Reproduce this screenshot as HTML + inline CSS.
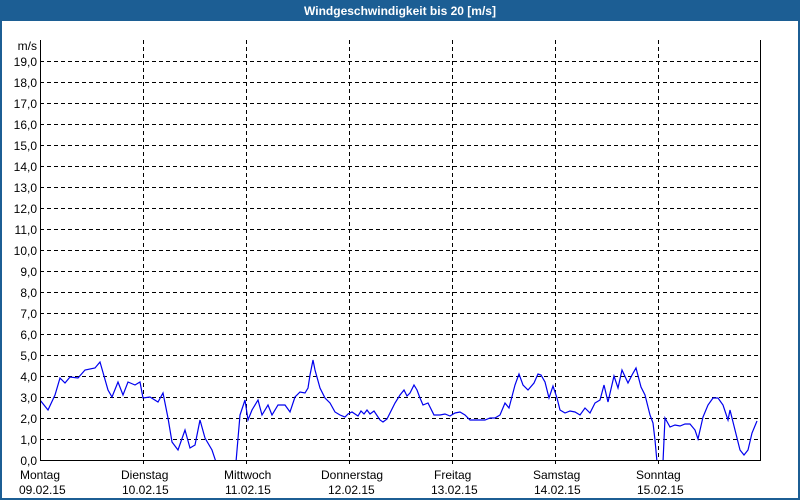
<!DOCTYPE html>
<html><head><meta charset="utf-8"><style>
html,body{margin:0;padding:0;width:800px;height:500px;overflow:hidden;background:#fff;font-family:"Liberation Sans",sans-serif}
</style></head><body>
<svg width="800" height="500" xmlns="http://www.w3.org/2000/svg" style="display:block">
<defs><clipPath id="c"><rect x="40" y="40" width="720" height="420"/></clipPath></defs>
<rect x="0" y="0" width="800" height="500" fill="#1c5e94"/>
<rect x="2" y="21" width="796" height="477" fill="#fff"/>
<text x="400" y="15" text-anchor="middle" font-family="Liberation Sans, sans-serif" font-size="12" font-weight="bold" fill="#fff">Windgeschwindigkeit bis 20 [m/s]</text>
<g stroke="#000" stroke-width="1" stroke-dasharray="4,3" shape-rendering="crispEdges">
<path d="M40 61.5H760M40 82.5H760M40 103.5H760M40 124.5H760M40 145.5H760M40 166.5H760M40 187.5H760M40 208.5H760M40 229.5H760M40 250.5H760M40 271.5H760M40 292.5H760M40 313.5H760M40 334.5H760M40 355.5H760M40 376.5H760M40 397.5H760M40 418.5H760M40 439.5H760"/>
<path d="M143.5 40V465M246.5 40V465M349.5 40V465M452.5 40V465M555.5 40V465M658.5 40V465"/>
</g>
<g font-family="Liberation Sans, sans-serif" font-size="12" fill="#000" text-anchor="end">
<text x="37" y="50">m/s</text>
<text x="37" y="66">19,0</text><text x="37" y="87">18,0</text><text x="37" y="108">17,0</text><text x="37" y="129">16,0</text><text x="37" y="150">15,0</text><text x="37" y="171">14,0</text><text x="37" y="192">13,0</text><text x="37" y="213">12,0</text><text x="37" y="234">11,0</text><text x="37" y="255">10,0</text><text x="37" y="276">9,0</text><text x="37" y="297">8,0</text><text x="37" y="318">7,0</text><text x="37" y="339">6,0</text><text x="37" y="360">5,0</text><text x="37" y="381">4,0</text><text x="37" y="402">3,0</text><text x="37" y="423">2,0</text><text x="37" y="444">1,0</text><text x="37" y="465">0,0</text>
</g>
<g font-family="Liberation Sans, sans-serif" font-size="12" fill="#000">
<text x="20" y="479">Montag</text><text x="19" y="494">09.02.15</text>
<text x="121" y="479">Dienstag</text><text x="122" y="494">10.02.15</text>
<text x="224" y="479">Mittwoch</text><text x="225" y="494">11.02.15</text>
<text x="321" y="479">Donnerstag</text><text x="328" y="494">12.02.15</text>
<text x="434" y="479">Freitag</text><text x="431" y="494">13.02.15</text>
<text x="533" y="479">Samstag</text><text x="534" y="494">14.02.15</text>
<text x="636" y="479">Sonntag</text><text x="637" y="494">15.02.15</text>
</g>
<polyline clip-path="url(#c)" fill="none" stroke="#0000ee" stroke-width="1.2" points="40,400 48,410 55,395 60,378 65,383 70,377 78,378 85,370 95,368 100,362 108,390 112,397 118,382 123,395 128,382 135,385 140,382 143,398 150,397 158,402 163,393 168,418 172,442 178,450 185,430 190,448 195,445 200,420 205,438 212,450 216,462 220,480 232,480 236,462 240,415 245,400 248,420 252,410 258,400 262,415 268,405 272,415 278,405 285,405 290,412 295,397 300,392 305,393 308,388 310,375 313,360 315,370 320,388 325,398 330,403 335,412 340,415 345,417 348,414 352,412 355,414 358,416 361,411 364,414 367,410 370,414 374,411 380,420 383,422 387,419 390,413 395,403 400,395 404,390 407,396 410,393 414,385 417,390 420,398 423,405 428,403 434,415 440,415 445,414 450,416 455,413 460,412 465,415 470,420 485,420 490,418 495,418 500,415 505,403 509,408 515,385 519,374 523,385 528,390 534,383 538,374 541,375 545,382 549,398 553,386 557,398 560,410 565,413 570,411 575,412 580,415 585,408 590,413 595,403 600,400 604,385 608,402 614,376 618,388 622,370 628,383 632,375 636,368 641,387 645,395 650,415 653,423 655,440 657,462 659,480 661,480 663,462 665,418 670,427 675,425 680,426 685,424 690,424 695,430 698,439 703,417 708,405 713,398 718,398 723,405 728,420 730,410 735,430 740,450 744,455 748,450 752,433 757,421"/>
<path d="M40.5 40V460.5H760.5V40" fill="none" stroke="#000" stroke-width="1" shape-rendering="crispEdges"/>
</svg>
</body></html>
